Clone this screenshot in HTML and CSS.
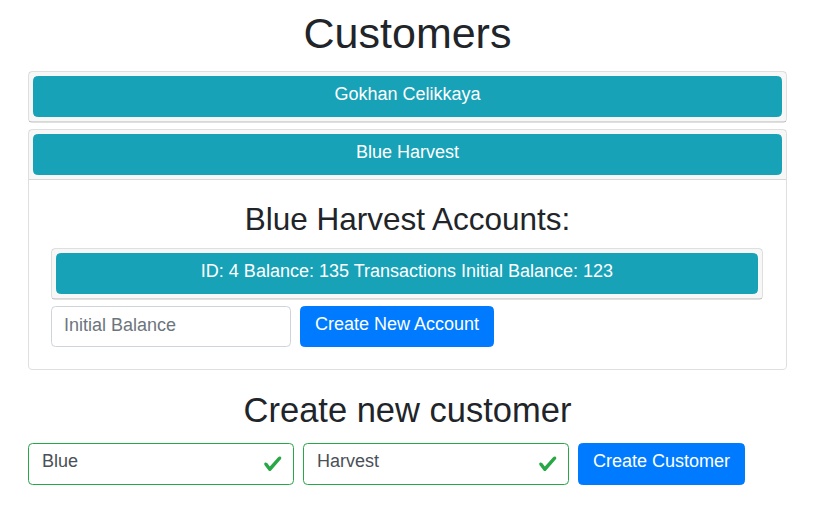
FILE: index.html
```html
<!DOCTYPE html>
<html lang="en">
<head>
<meta charset="utf-8">
<title>Customers</title>
<link rel="stylesheet" href="styles.css">
</head>
<body>
<div class="container">
  <h1 class="page-title">Customers</h1>

  <div class="card">
    <div class="card-header">
      <button class="btn btn-info btn-block">Gokhan Celikkaya</button>
    </div>
  </div>

  <div class="card">
    <div class="card-header">
      <button class="btn btn-info btn-block">Blue Harvest</button>
    </div>
    <div class="card-body">
      <h3 class="accounts-title">Blue Harvest Accounts:</h3>
      <div class="card card-inner">
        <div class="card-header">
          <button class="btn btn-info btn-block">ID: 4 Balance: 135 Transactions Initial Balance: 123</button>
        </div>
      </div>
      <div class="form-row">
        <input class="form-control balance-input" type="text" placeholder="Initial Balance">
        <button class="btn btn-primary">Create New Account</button>
      </div>
    </div>
  </div>

  <h2 class="section-title">Create new customer</h2>
  <div class="form-row customer-row">
    <div class="valid-field">
      <input class="form-control is-valid" type="text" value="Blue">
      <svg class="valid-icon" viewBox="0 0 8 8" aria-hidden="true"><path fill="#28a745" d="M2.3 6.73L.6 4.53c-.4-1.04.46-1.4 1.1-.8l1.1 1.4 3.4-3.8c.6-.63 1.6-.27 1.2.7l-4 4.6c-.43.5-.8.4-1.1.1z"/></svg>
    </div>
    <div class="valid-field">
      <input class="form-control is-valid" type="text" value="Harvest">
      <svg class="valid-icon" viewBox="0 0 8 8" aria-hidden="true"><path fill="#28a745" d="M2.3 6.73L.6 4.53c-.4-1.04.46-1.4 1.1-.8l1.1 1.4 3.4-3.8c.6-.63 1.6-.27 1.2.7l-4 4.6c-.43.5-.8.4-1.1.1z"/></svg>
    </div>
    <button class="btn btn-primary btn-tall">Create Customer</button>
  </div>
</div>
</body>
</html>
```

FILE: styles.css
```css
* { box-sizing: border-box; }

body {
  margin: 0;
  font-family: "Liberation Sans", Arial, sans-serif;
  font-size: 18px;
  color: #212529;
  background: #fff;
}

.container {
  width: 759px;
  margin-left: 28px;
  padding-top: 8px;
}

.page-title {
  font-size: 43px;
  font-weight: 400;
  line-height: 1.2;
  margin: 0 0 11px;
  text-align: center;
}

.card {
  border: 1px solid rgba(0, 0, 0, 0.125);
  border-radius: 4.5px;
  background: #fff;
  margin-bottom: 6px;
}

.card-header {
  padding: 4px;
  background: rgba(0, 0, 0, 0.03);
  border-bottom: 1px solid rgba(0, 0, 0, 0.125);
}

.card-body {
  padding: 21px 22px 22px;
}

.card-inner {
  width: 712px;
}

.accounts-title {
  font-size: 31.5px;
  font-weight: 400;
  line-height: 1.2;
  margin: 0 0 10px;
  text-align: center;
}

.btn {
  font-family: inherit;
  font-size: 18px;
  line-height: 27px;
  border: 1px solid transparent;
  border-radius: 4.5px;
  padding: 4px 14px 8px;
  color: #fff;
  cursor: pointer;
}

.btn-block {
  display: block;
  width: 100%;
}

.btn-info {
  background: #17a2b8;
  border-color: #17a2b8;
}

.btn-primary {
  background: #007bff;
  border-color: #007bff;
}

.btn-tall {
  padding-bottom: 9px;
}

.form-row {
  display: flex;
  gap: 9px;
  align-items: flex-start;
}

.form-control {
  font-family: inherit;
  font-size: 18px;
  line-height: 27px;
  color: #495057;
  background: #fff;
  border: 1px solid #ced4da;
  border-radius: 4.5px;
  padding: 5px 12px 7px;
  outline: none;
}

.form-control::placeholder {
  color: #6c757d;
}

.balance-input {
  width: 240px;
}

.section-title {
  font-size: 34.5px;
  font-weight: 400;
  line-height: 1.2;
  margin: 20px 0 11px;
  text-align: center;
}

.valid-field {
  position: relative;
  width: 266px;
}

.form-control.is-valid {
  width: 100%;
  border-color: #28a745;
  padding: 4px 40px 9px 13px;
}

.valid-icon {
  position: absolute;
  right: 12px;
  top: 11px;
  width: 19.5px;
  height: 19.5px;
}
```
